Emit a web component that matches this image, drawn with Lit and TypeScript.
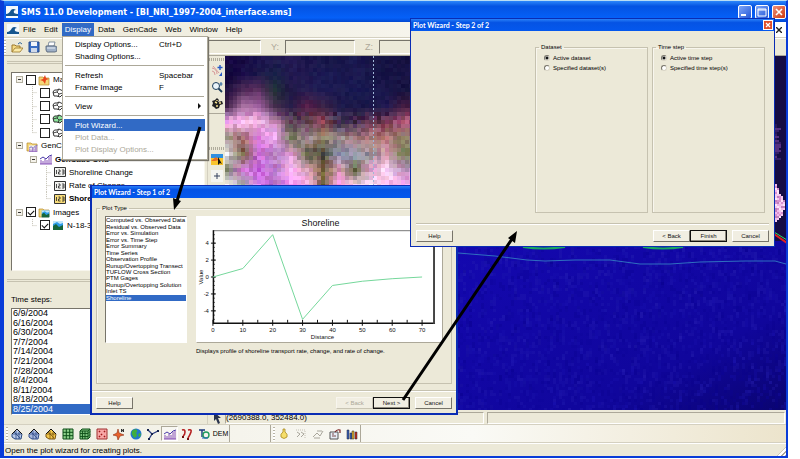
import { LitElement, html, css, svg, nothing } from "lit";
import { customElement, property } from "lit/decorators.js";
import { classMap } from "lit/directives/class-map.js";

/* ---------- shared control styles ---------- */

const controls = css`
  * { box-sizing: border-box; }
  button, input { font: inherit; color: inherit; margin: 0; padding: 0; }
  button { border: 0; background: none; }
  svg { display: block; }
  .push {
    width: 37px; height: 12px; flex: none;
    display: flex; align-items: center; justify-content: center;
    background: #f1eee2; color: #111;
    border: 1px solid; border-color: #fff #77746a #77746a #fff;
  }
  .push.primary { border: 1px solid #111; box-shadow: inset -1px -1px #8d897c; }
  .push:disabled { color: #aca899; border-color: #f7f5ee #c9c5b4 #c9c5b4 #f7f5ee; }
  .choices { display: flex; flex-direction: column; position: relative; }
  .choice { flex: 1 1 0; min-height: 0; line-height: 1; display: flex; align-items: center; padding-left: 1px; white-space: nowrap; }
  .choice input { position: absolute; opacity: 0; width: 1px; height: 1px; }
  .choice:has(input:checked) { background: #316ac5; color: #fff; }
`;

const choiceList = (name: string, items: string[], picked: string) =>
  items.map((t) => html`<label class="choice">
    <input type="radio" name=${name} .checked=${t === picked}>${t}</label>`);

/* ---------- icons, drawn on a 12 x 12 grid ---------- */

const mesh = (fill: string, edge: string) => svg`
  <path d="M1 6 6 1l5 5-1 5H4L1 9z" fill=${fill} stroke=${edge}/>
  <path d="M2 6h8M5 3v8M8 4v7M3 4l6 6" stroke=${edge} fill="none" stroke-width=".8"/>
  <path d="M1 6 6 1l5 5" stroke="#111" fill="none"/>`;
const scene = svg`<path d="M1 2h10v9H1z" fill="#2d9be8"/><path d="M1 7 4 5l3 3 4-2v5H1z" fill="#17663a"/><path d="M1 2h10v2L8 5 5 3 1 5z" fill="#bfe6fa"/>`;
const folder = svg`<path d="M1 3h4l1 1h5v7H1z" fill="#f4d678" stroke="#b68b2c" stroke-width=".7"/>`;
const coverage = (fill: string) => svg`<path d="M1 5q1-3 4-2l2-1 4 2v3L8 10 5 9 2 9z" fill=${fill} stroke="#333" stroke-width="1"/><path d="M1 6l4-1 2-3M5 5l2 2 4-1M7 7l-1 3" fill="none" stroke="#333" stroke-width=".9"/>`;
const numbers = (fill: string) => svg`<path d="M.5 1.5h11v9H.5z" fill=${fill} stroke="#333"/><path d="M2.500 4v4M4.500 4h1.500v2H4.500v2H6.500M8 4h2v4H8M8 6h2" fill="none" stroke="#222" stroke-width=".8"/>`;
const bars = svg`<path d="M1 11V7m2 4V8m2 3V6m2 5V7m2 4V4m2 7V3M0 11h12" stroke="#7b3fb0" stroke-width=".9"/><path d="M0 6l3-2 3 2 3-3 3-1" fill="none" stroke="#4a3aa8" stroke-width="1"/>`;

const icons: Record<string, unknown> = {
  app: svg`<path d="M0 0h12v12H0z" fill="#f4f9fc"/><path d="M0 8q3 0 5-4 2-2 5 0-3 0-2 3 2 1 4 1v2H0z" fill="#16568f"/>`,
  open: svg`<path d="M1 11V4h3l1 1h4v2" fill="#f6dc85" stroke="#9b762a"/><path d="M1 11l3-4h8l-3 4z" fill="#fbe9a6" stroke="#9b762a" stroke-width=".8"/><path d="M7 3q2-3 4 0" fill="none" stroke="#336a9c"/>`,
  save: svg`<path d="M1 1h10v10H1z" fill="#3b6fc4" stroke="#24498a"/><path d="M3 1h6v4H3z" fill="#f3f6fb"/><path d="M3 7h6v4H3z" fill="#cfd9ea"/>`,
  print: svg`<path d="M4 1h6L9 5H3z" fill="#fff" stroke="#68788c" stroke-width=".8"/><path d="M1 5h9l2 1v4l-2 1H2L1 9z" fill="#9fb0c6" stroke="#4b5a6e" stroke-width=".8"/><path d="M2 7h8" stroke="#e9eef5"/>`,
  pan: svg`<path d="M1 3q5 1 5 6M1 6q3 0 3 4M2 1l6 7" stroke="#d79a9a" fill="none"/><path d="M9 0v5M6.500 2.500h5" stroke="#2458c4" stroke-width="1.400"/><path d="M8 11h3V7z" fill="#2458c4"/>`,
  zoom: svg`<circle cx="5" cy="5" r="3.500" fill="#e9f4fa" stroke="#1c3d5c"/><path d="M7.500 7.500 11 11" stroke="#1c3d5c" stroke-width="1.800"/><path d="M10 1v4M8.500 3h3" stroke="#1c5c9c" stroke-width=".9"/>`,
  rotate: svg`<path d="M6 1l2 2-1 2 4-1 1 3-3 1-1 3-3 1-2-2-2-1 1-3-1-2 3-1z" fill="#222"/><path d="M4 5l2 1M8 6l2 0M5 9l2 0M6 3v1" stroke="#f3e08e" stroke-width="1.400"/>`,
  select: svg`<path d="M0 0h12v4H0z" fill="#2f8fe0"/><path d="M0 4h12v7H0z" fill="#f8c42c"/><path d="M0 7l5-4 3 3-4 1z" fill="#e66c22"/><path d="M7 3v8l2-2 2 1z" fill="#111"/>`,
  point: svg`<path d="M0 0h12v12H0z" fill="#f4f4f0"/><path d="M6 3v6M3 6h6" stroke="#34405c"/>`,
  pointer: svg`<path d="M3 0l7 6H7l2 5-2 1-2-5-2 2z" fill="#28324c"/>`,
  meshBlue: mesh("#b7c8e8", "#284880"), meshSlate: mesh("#a8b8dc", "#304c8c"), meshGold: mesh("#f4c84a", "#7a5410"),
  grid: svg`<path d="M1 1h10v10H1z" fill="#8fd08a" stroke="#0e4f18"/><path d="M1 4.300h10M1 7.700h10M4.300 1v10M7.700 1v10" stroke="#0e4f18"/>`,
  grid3: svg`<path d="M1 3l2-2h8v8l-2 2H1z" fill="#79c07a" stroke="#0e4f18"/><path d="M1 5.500h8l2-2M1 8.500h8l2-2M3.500 3v8M6 3v8M9 3v8M1 3h8l2-2" stroke="#0e4f18" fill="none" stroke-width=".9"/>`,
  scatter: svg`<path d="M1 1h10v10H1z" fill="#f7a6a6" stroke="#a03030"/><path d="M3 3h1v1H3zM8 3h1v1H8zM5 6h1v1H5zM8 8h1v1H8zM3 8h1v1H3z" fill="#a01818" stroke="#a01818" stroke-width=".6"/>`,
  compass: svg`<path d="M5 1l1 4 5 2-4 1-2 4-1-4-4-1 4-2z" fill="#e8622c" stroke="#8e2c10" stroke-width=".6"/><path d="M8.500 4V1l2 3V1" stroke="#222" fill="none" stroke-width=".9"/>`,
  globe: svg`<circle cx="6" cy="6" r="5.500" fill="#2277cc"/><path d="M2 3q3-3 5-1 1 2-1 3 2 2 0 4-2 2-3-1-2-2-1-5zM9 5l2 1-1 3-2-1z" fill="#3fae3c"/>`,
  river: svg`<path d="M1 2l4 4 6-3M5 6 2 11" stroke="#2b3c80" fill="none" stroke-width="1.300"/><path d="M0 1h2v2H0zM4 5h2v2H4zM10 2h2v2h-2zM1 10h2v2H1z" fill="#16234f"/>`,
  wave: bars,
  tracks: svg`<path d="M1 2q3-1 3 2T2 8M7 2q4-1 3 2T7 10" stroke="#b62222" fill="none" stroke-width="1.600"/><path d="M1 8h2v2H1zM6 10h2v2H6z" fill="#701010"/>`,
  annotate: svg`<path d="M1 2h6M4 2v7" stroke="#18387c" stroke-width="1.400"/><circle cx="8" cy="7" r="3" fill="none" stroke="#1f9a5c" stroke-width="1.400"/><path d="M4 10h6" stroke="#2863c8"/>`,
  bulb: svg`<path d="M5 1h2v3q3 2 2 5-3 3-6 0-1-3 2-5z" fill="#f6df6c" stroke="#a88920" stroke-width=".8"/>`,
  next: svg`<path d="M1 2h9v8" stroke="#c4c0b4" fill="none" stroke-dasharray="1 1"/><path d="M2 4l3 2-3 3M6 4l3 2-3 3" stroke="#a9a69c" fill="none"/>`,
  path: svg`<path d="M1 9l4-4 3 3 3-5M5 3l5 0M2 10h6" stroke="#a9a69c" fill="none"/>`,
  sheet: svg`<path d="M1 4h8v7H1z" fill="#e7edf6" stroke="#555"/><path d="M3 6h2M3 8h4" stroke="#7a4a4a"/><path d="M6 4q2-3 5-2v3" stroke="#7a2222" fill="none" stroke-width="1.200"/>`,
  chart: svg`<path d="M1 11V2h2v9zM4 11V5h2v6z" fill="#3a62b8" stroke="#223" stroke-width=".5"/><path d="M6 11V3h2v8z" fill="#e6b62c" stroke="#223" stroke-width=".5"/><path d="M9 11V4h2v7z" fill="#c8321e" stroke="#223" stroke-width=".5"/>`,
  scene,
  sceneFolder: svg`${folder}<g transform="translate(3 3) scale(.75)">${scene}</g>`,
  barFolder: svg`${folder}<g transform="translate(3 4) scale(.7)"><path d="M0 2h12v10H0z" fill="#eee"/>${bars}</g>`,
  mapFolder: svg`${folder}<path d="M7 1l1 3 3 1-3 1-1 4-2-3-3-1 3-1z" fill="#e8451c"/>`,
  cover: coverage("#fff"), coverGreen: coverage("#8be59a"),
  num: numbers("#f1f1ee"), numGold: numbers("#f8dc7a"), bars,
};

@customElement("sms-icon")
class SmsIcon extends LitElement {
  static styles = css`
    :host { display: block; width: 12px; height: 12px; flex: none; }
    svg { display: block; width: 100%; height: 100%; }`;
  @property() name = "";
  render() {
    return html`<svg viewBox="0 0 12 12" fill="none" aria-hidden="true">${icons[this.name]}</svg>`;
  }
}

/* ---------- aerial image ---------- */

const shore = [
  "1a0a48 150a40 1c1450 201a50 241a54 1a1448 181548 161446 1a1850 1a1648 181444 141040",
  "120838 180c48 1c1848 182048 221850 1e1850 1c1c54 1a1850 1c1a50 181648 161444 181244",
  "1e1040 502a58 5c3060 203038 201848 241c50 1e1c54 1c1a50 181850 1a1850 181648 161440",
  "402048 a870a0 a060a0 402c48 281c48 58204c 382044 1c1848 1a1848 181648 201850 401c40",
  "f0a8e8 ffc0f0 f0b0e0 c080b0 604858 604050 904850 403050 402848 60304c 703850 b05878",
  "a09080 a06868 e080e0 f0b0f8 707050 a88898 908060 a09098 a07880 b08080 c08078 8c7c68",
  "e8e0e8 70603c d070d8 b080c0 e0a0d0 606040 444438 8c8cac 9494a8 989090 d098a8 788058",
  "707868 e088e0 c060d8 c080d0 f8b0f0 e0a8c0 807048 d898b0 607048 e8a0d0 ffd8f8 c090c0",
  "f0f0f0 a0b0a0 e080f0 a058b8 ff98ff ffb0e8 706840 ff98e0 ffd0f0 fff0f8 ffc0f0 ffb0f0",
].map((r) => r.split(" ").map((h) => [0, 2, 4].map((i) => parseInt(h.slice(i, i + 2), 16))));

function randomizer(seed: number) {
  return () => {
    seed = (seed * 1664525 + 1013904223) >>> 0;
    return seed / 4294967296;
  };
}

function shoreCells() {
  const rnd = randomizer(7);
  const out = [];
  const step = 4;
  for (let y = 0; y < 132; y += step) {
    for (let x = 0; x < 188; x += step) {
      const gx = Math.min(x / 16, 10.99), gy = Math.min(y / 16, 7.99);
      const ix = Math.floor(gx), iy = Math.floor(gy), fx = gx - ix, fy = gy - iy;
      const amp = y < 56 ? 10 : 40;
      const light = (rnd() - 0.5) * amp;
      const rgb = [0, 1, 2].map((k) => {
        const top = shore[iy][ix][k] * (1 - fx) + shore[iy][ix + 1][k] * fx;
        const low = shore[iy + 1][ix][k] * (1 - fx) + shore[iy + 1][ix + 1][k] * fx;
        const v = top * (1 - fy) + low * fy + light + (rnd() - 0.5) * amp * 0.5;
        return Math.max(0, Math.min(255, Math.round(v)));
      });
      out.push(svg`<rect x=${x} y=${y} width=${step} height=${step} fill="rgb(${rgb.join(",")})"/>`);
    }
  }
  return out;
}

function seaCells() {
  const rnd = randomizer(21);
  const tones = ["#1c14b4", "#08008c", "#201cb0", "#0a0298", "#2a22b4"];
  return Array.from({ length: 2600 }, () => {
    const x = 232 + Math.floor(rnd() * 110) * 3, y = 190 + Math.floor(rnd() * 56) * 3;
    const tall = rnd() > 0.6 ? 6 : 3;
    return svg`<rect x=${x} y=${y} width="3" height=${tall} fill=${tones[Math.floor(rnd() * 5)]} opacity=".25"/>`;
  });
}

/* width of the bright bank, in 2px columns, going down the east edge */
const bank = [1, 1, 2, 2, 2, 3, 4, 4, 5, 5, 5, 5, 5, 4, 4, 4, 3, 2, 1];

function edgeCells() {
  const rnd = randomizer(5);
  const pinks = ["#f4c8f0", "#d890d0", "#ffe4fa", "#c080bc", "#f0b8ec"];
  const violets = ["#342068", "#543080", "#281858"];
  const out = [];
  for (let y = 68; y < 104; y += 2)
    out.push(svg`<rect x="550" y=${y} width=${2 + Math.floor(rnd() * 3) * 2} height="2" fill=${violets[Math.floor(rnd() * 3)]}/>`);
  bank.forEach((wide, row) => {
    for (let col = 0; col < wide; col++)
      out.push(svg`<rect x=${550 + col * 2} y=${128 + row * 2} width="2" height="2" fill=${pinks[Math.floor(rnd() * 5)]}/>`);
  });
  return out;
}

@customElement("aerial-map")
class AerialMap extends LitElement {
  static styles = css`
    :host { display: block; overflow: hidden; background: #10089c; }
    svg { display: block; width: 100%; height: 100%; }`;
  render() {
    return html`<svg viewBox="0 0 561 354" preserveAspectRatio="xMinYMin slice" shape-rendering="crispEdges" role="img" aria-label="Aerial image of the shoreline">
      <defs><linearGradient id="sea" x1="0" x2="1" y1="0" y2="1">
        <stop offset="0" stop-color="#1408b0"/><stop offset=".7" stop-color="#10069c"/><stop offset="1" stop-color="#0a0470"/>
      </linearGradient></defs>
      <rect width="561" height="354" fill="#150c44"/>
      <rect x="232" y="185" width="329" height="169" fill="url(#sea)"/>
      ${seaCells()}${shoreCells()}${edgeCells()}
      <path d="M148.500 0V132" stroke="#9fb8d8" stroke-dasharray="2 2"/>
      <g fill="none" shape-rendering="auto">
        <path d="M233 197l37 3 32 4 18 1 30-1h35l30 4h30l30-2 45-1h30l11 3" stroke="#2f6fc0"/>
        <path d="M298 191q20 3 42 0M418 191q20 3 40 0" stroke="#18a860" stroke-width="2"/>
        <path d="M549 178l13 9" stroke="#e02020" stroke-width="2"/>
        <path d="M549 176l13 8" stroke="#30e060"/>
      </g>
    </svg>`;
  }
}

/* ---------- profile plot ---------- */

const profile = [[0, 0], [10, 1], [20, 5], [30, -5], [40, -1], [50, -0.5], [60, -0.2], [70, 0]];
const px = (v: number) => 16 + v * 3;
const py = (v: number) => 60 - v * 8.5;

@customElement("profile-plot")
class ProfilePlot extends LitElement {
  static styles = css`
    :host { display: block; background: #fff; border: 1px solid; border-color: #fff #aca899 #aca899 #fff; }
    svg { display: block; width: 100%; height: 100%; }
    text { font-family: "Liberation Sans", Arial, sans-serif; font-size: 6px; fill: #111; }
    .title { font-size: 9px; }
    .mid { text-anchor: middle; }
    .end { text-anchor: end; }`;
  render() {
    const minorX = Array.from({ length: 8 }, (_, i) => i * 10 + 5).filter((v) => v < 70);
    const minorY = Array.from({ length: 21 }, (_, i) => (i - 10) / 2);
    return html`<svg viewBox="0 0 246 125" role="img" aria-label="Shoreline profile">
      <text class="title mid" x="124" y="9">Shoreline</text>
      <path d="M16 13.500H238" stroke="#777" fill="none"/>
      <path d="M16.500 13V107M16 106.500H239" stroke="#111" stroke-width="1.500" fill="none"/>
      <path d="M238 13V107" stroke="#444" stroke-width="2"/>
      ${minorY.map((v) => svg`<path d="M16 ${py(v)}h2" stroke="#111" stroke-width=".7"/>`)}
      ${[4, 2, 0, -2, -4].map((v) => svg`<path d="M14 ${py(v)}h5" stroke="#111"/><text class="end" x="12" y=${py(v) + 2}>${v}</text>`)}
      ${minorX.map((v) => svg`<path d="M${px(v)} 103v3" stroke="#111"/>`)}
      ${[0, 1, 2, 3, 4, 5, 6, 7].map((i) => svg`<path d="M${px(i * 10)} 103v6" stroke="#111"/><text class="mid" x=${px(i * 10)} y="115">${i * 10}</text>`)}
      <text class="mid" x="126" y="122">Distance</text>
      <text class="mid" transform="translate(6 60) rotate(-90)">Value</text>
      <polyline points=${profile.map(([x, y]) => `${px(x)},${py(y)}`).join(" ")} fill="none" stroke="#74d79a"/>
    </svg>`;
  }
}

/* ---------- wizard dialogs ---------- */

const dialogBase = css`
  :host {
    display: flex; flex-direction: column; background: #ece9d8;
    border: 1px solid #0a2cb4; font: 6px "Liberation Sans", Arial, sans-serif; color: #000;
  }
  .bar {
    height: 12px; flex: none; display: flex; align-items: center; justify-content: space-between;
    padding: 0 1px 0 2px; background: linear-gradient(#2a80f8, #0553e4 30%, #0458ee);
    color: #fff; font: bold 7px Lato, "Liberation Sans", sans-serif;
  }
  .close { width: 10px; height: 10px; background: #e0502c; border: 1px solid #fff; }
  fieldset { margin: 0; border: 1px solid #c6c2b0; min-width: 0; padding: 0; box-shadow: inset 1px 1px #f8f6ee; }
  legend { padding: 0 2px; margin-left: 3px; line-height: 8px; }
  .actions { display: flex; align-items: center; }
  .gap { flex: 1; }
  .cancel { margin-left: 5px; }
`;

@customElement("wizard-type")
class WizardType extends LitElement {
  static styles = [controls, dialogBase, css`
    :host { border-width: 1px 2px 2px; }
    .group { margin: 6px 4px 6px 4px; flex: 1; }
    .inner { display: flex; gap: 9px; padding: 4px 8px 0; }
    .types { width: 82px; height: 127px; flex: none; background: #fff; border: 1px solid; border-color: #77746a #fff #fff #77746a; }
    .choices { height: 84px; }
    .choice { padding-left: 0; }
    .right { flex: 1; min-width: 0; }
    profile-plot { height: 127px; }
    .note { margin: 4px 0 0; line-height: 8px; }
    .actions { border-top: 1px solid #c6c2b0; box-shadow: inset 0 1px #fff; padding: 6px 4px 4px; }`];
  render() {
    const types = ["Computed vs. Observed Data", "Residual vs. Observed Data", "Error vs. Simulation",
      "Error vs. Time Step", "Error Summary", "Time Series", "Observation Profile",
      "Runup/Overtopping Transect", "TUFLOW Cross Section", "PTM Gages", "Runup/Overtopping Solution",
      "Inlet TS", "Shoreline"];
    return html`<div class="bar">Plot Wizard - Step 1 of 2</div>
      <fieldset class="group"><legend>Plot Type</legend>
        <div class="inner">
          <div class="types"><div class="choices">${choiceList("type", types, "Shoreline")}</div></div>
          <div class="right"><profile-plot></profile-plot>
            <p class="note">Displays profile of shoreline transport rate, change, and rate of change.</p></div>
        </div>
      </fieldset>
      <div class="actions"><button class="push">Help</button><span class="gap"></span>
        <button class="push" disabled>&lt; Back</button><button class="push primary">Next &gt;</button>
        <button class="push cancel">Cancel</button></div>`;
  }
}

@customElement("wizard-options")
class WizardOptions extends LitElement {
  static styles = [controls, dialogBase, css`
    .body { flex: 1; display: flex; gap: 4px; justify-content: flex-end; padding: 12px 9px 10px 5px; }
    fieldset { width: 113px; }
    .radio { display: flex; align-items: center; gap: 3px; height: 10px; margin-left: 8px; }
    .radio:first-of-type { margin-top: 2px; }
    .radio input {
      appearance: none; width: 6px; height: 6px; border-radius: 50%; background: #fff;
      border: 1px solid; border-color: #77746a #d8d4c4 #d8d4c4 #77746a;
    }
    .radio input:checked { background: radial-gradient(#111 0 1px, #fff 2px); }
    .actions { margin: 0 5px; border-top: 1px solid #c6c2b0; box-shadow: inset 0 1px #fff; padding: 6px 0 4px; }`];
  render() {
    const group = (title: string, name: string, a: string, b: string) => html`<fieldset><legend>${title}</legend>
      <label class="radio"><input type="radio" name=${name} checked>${a}</label>
      <label class="radio"><input type="radio" name=${name}>${b}</label></fieldset>`;
    return html`<div class="bar">Plot Wizard - Step 2 of 2
        <button class="close" aria-label="Close"><svg viewBox="0 0 8 8"><path d="M2 2l4 4M6 2 2 6" stroke="#fff" stroke-width="1.200"/></svg></button></div>
      <div class="body">
        ${group("Dataset", "dataset", "Active dataset", "Specified dataset(s)")}
        ${group("Time step", "step", "Active time step", "Specified time step(s)")}
      </div>
      <div class="actions"><button class="push">Help</button><span class="gap"></span>
        <button class="push">&lt; Back</button><button class="push primary">Finish</button>
        <button class="push cancel">Cancel</button></div>`;
  }
}

/* ---------- project tree ---------- */

interface Node { depth: number; open?: boolean; check?: boolean; icon: string; label?: string; strong?: boolean; }

const nodes: Node[] = [
  { depth: 0, open: true, check: false, icon: "mapFolder", label: "Map" },
  { depth: 1, check: false, icon: "cover" },
  { depth: 1, check: false, icon: "cover" },
  { depth: 1, check: false, icon: "coverGreen" },
  { depth: 1, check: false, icon: "cover" },
  { depth: 0, open: true, icon: "barFolder", label: "GenCade" },
  { depth: 1, open: true, icon: "bars", label: "GenCade Grid", strong: true },
  { depth: 2, icon: "num", label: "Shoreline Change" },
  { depth: 2, icon: "num", label: "Rate of Change" },
  { depth: 2, icon: "numGold", label: "Shoreline", strong: true },
  { depth: 0, open: true, check: true, icon: "sceneFolder", label: "Images" },
  { depth: 1, check: true, icon: "scene", label: "N-18-3" },
];

@customElement("project-tree")
class ProjectTree extends LitElement {
  static styles = [controls, css`
    :host { display: block; background: #fff; border: 1px solid; border-color: #77746a #f8f6ee #f8f6ee #77746a; }
    .rows { display: grid; grid-auto-rows: 1fr; height: 159px; }
    .row { display: flex; align-items: center; gap: 3px; padding-left: 3px; white-space: nowrap; }
    .stem { width: 11px; align-self: stretch; flex: none; }
    .twig { width: 8px; align-self: stretch; flex: none; display: grid; place-items: center; }
    .line { width: 100%; height: 100%; }
    .toggle { width: 7px; height: 7px; border: 1px solid #b4b0a0; background: #f4f2ea; display: grid; place-items: center; }
    .toggle::after { content: ""; width: 3px; height: 1px; background: #333; }
    .box { appearance: none; width: 10px; height: 10px; border: 1px solid #222; background: #fff; flex: none; display: grid; place-items: center; }
    .box:checked::after { content: ""; width: 5px; height: 3px; border: solid #111; border-width: 0 0 1px 1px; rotate: -45deg; margin-top: -1px; }
    .box + sms-icon { margin-left: -1px; }
    .strong { font-weight: bold; }`];
  render() {
    return html`<div class="rows">${nodes.map((n, i) => html`<div class="row">
      ${Array.from({ length: n.depth }, () => html`<span class="stem"></span>`)}
      <span class="twig">${n.open
        ? html`<button class="toggle" aria-label="Collapse"></button>`
        : html`<svg class="line" viewBox="0 0 8 13" fill="none"><path d="M3.500 0v${nodes[i + 1] && nodes[i + 1].depth === n.depth && !nodes[i + 1].open ? 13 : 6.5}M3.500 6.500H8" stroke="#c4c0b4" stroke-dasharray="1 1"/></svg>`}</span>
      ${n.check === undefined ? nothing : html`<input class="box" type="checkbox" aria-label=${n.label ?? "Coverage"} .checked=${n.check}>`}
      <sms-icon name=${n.icon}></sms-icon>
      ${n.label ? html`<span class=${classMap({ strong: !!n.strong })}>${n.label}</span>` : nothing}
    </div>`)}</div>`;
  }
}

/* ---------- main window ---------- */

@customElement("app-root")
class AppRoot extends LitElement {
  static styles = [controls, css`
    :host { display: block; position: relative; background: #fff; min-height: 100vh; font: 8px "Liberation Sans", Arial, sans-serif; color: #000; overflow: hidden; }
    .window {
      margin-right: 12px; display: flex; flex-direction: column; background: #ece9d8;
      border: solid #0a3cd8; border-width: 0 2px 2px 4px; border-top: 1px solid #b8dcf4;
    }
    .title {
      height: 21px; display: flex; align-items: center; gap: 3px; padding: 1px 0 0 2px;
      background: linear-gradient(#2c86fa, #0453e2 25%, #0560f8 80%, #0348d0);
      color: #fff; font: bold 9px "DejaVu Sans Condensed", "DejaVu Sans", sans-serif; white-space: nowrap;
    }
    .title .fill { flex: 1; }
    .caption { width: 14px; height: 14px; border: 1px solid #fff; border-radius: 2px; background: linear-gradient(135deg, #7ea6f8, #2458d8); }
    .caption.quit { background: linear-gradient(135deg, #f09078, #cc3810); }
    .menubar { height: 16px; display: flex; align-items: center; background: linear-gradient(90deg, #ece9d8, #fff); border-bottom: 1px solid #d4d0c0; }
    .menubar sms-icon { margin: 0 0 0 3px; }
    .menubar button { height: 14px; padding: 0 4px; }
    .menubar .on { background: #316ac5; color: #fff; padding: 0 3px; }
    .menubar .fill { flex: 1; }
    .tools { height: 18px; display: flex; align-items: center; border-bottom: 1px solid #aca899; box-shadow: inset 0 1px #fff; }
    .tools .btn, .dock .btn { width: 17px; display: grid; place-items: center; }
    .grip { width: 2px; height: 14px; flex: none; background: repeating-linear-gradient(#b8b4a4 0 1px, #fff 1px 3px); }
    .tools .grip { margin-right: 2px; }
    .coord { display: flex; align-items: center; gap: 6px; color: #aca899; margin-left: 10px; font-size: 9px; }
    .coord.first { margin-left: 132px; }
    .coord input { width: 70px; height: 14px; background: #ece9d8; border: 1px solid; border-color: #77746a #fff #fff #77746a; }
    .main { display: flex; }
    .side { width: 203px; flex: none; padding: 5px 2px 0 7px; display: flex; flex-direction: column; }
    .rule { height: 3px; margin: 0 0 0 -4px; border: solid #c6c2b0; border-width: 1px 0; flex: none; }
    project-tree { height: 199px; margin: 8px 0; }
    h2 { font: inherit; margin: 13px 0 4px; line-height: 9px; }
    .steps { background: #fff; border: 1px solid; border-color: #77746a #fff #fff #77746a; font-size: 9px; height: 107px; }
    .strip { width: 18px; flex: none; padding-top: 2px; display: flex; flex-direction: column; align-items: center; gap: 4px; border-left: 1px solid #d4d0c0; }
    .strip .last { margin-top: auto; }
    .dots { width: 15px; height: 3px; background: repeating-linear-gradient(90deg, #b0ac9c 0 1px, transparent 1px 2px); }
    .split { width: 16px; height: 1px; background: #aca899; margin-bottom: 29px; }
    .view { flex: 1; min-width: 0; display: flex; flex-direction: column; }
    aerial-map { height: 354px; }
    .readout { display: flex; gap: 3px; padding: 2px 1px 0 0; height: 14px; }
    .cell { border: 1px solid; border-color: #aca899 #fff #fff #aca899; height: 12px; line-height: 9px; flex: 1; }
    .cell.pos { flex: none; width: 259px; }
    .dock { height: 19px; display: flex; align-items: center; padding-left: 2px; border: solid #d4d0c0; border-width: 1px 0; background: linear-gradient(90deg, #f0eee2, #fafaf6 60%, #ece4cc); }
    .dock .btn { height: 15px; }
    .dock .on { border: 1px solid; border-color: #aca899 #fff #fff #aca899; background: #f8f7f2; }
    .dock .dem { font-size: 7px; }
    .sep { width: 1px; height: 17px; background: #aca899; }
    .sep.wide { margin: 0 2px 0 40px; }
    .status { height: 13px; display: flex; align-items: center; justify-content: space-between; border-top: 1px solid #fff; padding-left: 1px; }
    .size { width: 9px; height: 9px; align-self: flex-end; background: repeating-linear-gradient(135deg, #aca899 0 1px, #fff 1px 3px); clip-path: polygon(100% 0, 100% 100%, 0 100%); }
    .menu {
      position: absolute; left: 62px; top: 36px; width: 146px; padding: 1px 2px 4px 1px; background: #fff;
      border: 1px solid #aca899; box-shadow: 1px 1px 1px #77746a;
    }
    .item { display: flex; align-items: center; width: 100%; height: 12px; padding: 0 4px 0 11px; text-align: left; }
    .item span:first-child { width: 84px; }
    .item.on { background: #316ac5; color: #fff; }
    .item:disabled { color: #aca899; }
    .item .more { margin-left: auto; width: 3px; height: 6px; background: #111; clip-path: polygon(0 0, 100% 50%, 0 100%); }
    .menu hr { margin: 3px 1px; border: 0; height: 1px; background: #aca899; }
    wizard-type { position: absolute; left: 90px; top: 185px; width: 368px; height: 230px; }
    wizard-options { position: absolute; left: 410px; top: 18px; width: 365px; height: 229px; }
    .arrows { position: absolute; left: 0; top: 0; width: 800px; height: 459px; pointer-events: none; }`];

  render() {
    const steps = ["6/9/2004", "6/16/2004", "6/30/2004", "7/7/2004", "7/14/2004", "7/21/2004",
      "7/28/2004", "8/4/2004", "8/11/2004", "8/18/2004", "8/25/2004"];
    const btn = (name: string, on = false) => html`<button class=${classMap({ btn: true, on })} aria-label=${name}><sms-icon name=${name}></sms-icon></button>`;
    const item = (label: string, key = "", on = false, off = false) => html`<button class=${classMap({ item: true, on })} ?disabled=${off}><span>${label}</span>${key ? html`<span>${key}</span>` : nothing}</button>`;
    return html`
      <div class="window">
        <header class="title"><sms-icon name="app"></sms-icon>SMS 11.0 Development - [BI_NRI_1997-2004_interface.sms]<span class="fill"></span>
          <button class="caption" aria-label="Minimize"><svg viewBox="0 0 12 12"><path d="M2 9h5" stroke="#fff" stroke-width="2"/></svg></button>
          <button class="caption" aria-label="Restore"><svg viewBox="0 0 12 12"><path d="M2 3h8v7H2zM2 4h8" stroke="#fff" fill="none"/></svg></button>
          <button class="caption quit" aria-label="Close"><svg viewBox="0 0 12 12"><path d="M3 3l6 6M9 3 3 9" stroke="#fff" stroke-width="1.600"/></svg></button>
        </header>
        <nav class="menubar"><sms-icon name="app"></sms-icon>
          ${["File", "Edit", "Display", "Data", "GenCade", "Web", "Window", "Help"].map((m) => html`<button class=${classMap({ on: m === "Display" })}>${m}</button>`)}
          <span class="fill"></span>
          <button aria-label="Close document"><svg width="6" height="6" viewBox="0 0 6 6"><path d="M0 0l6 6M6 0 0 6" stroke="#222" stroke-width="1.400"/></svg></button>
        </nav>
        <div class="tools"><span class="grip"></span>${btn("open")}${btn("save")}${btn("print")}
          <label class="coord first"><input aria-label="X"></label><label class="coord">Y:<input></label><label class="coord">Z:<input></label>
        </div>
        <div class="main">
          <aside class="side">
            <div class="rule"></div><project-tree></project-tree><div class="rule"></div>
            <h2>Time steps:</h2>
            <div class="steps choices">${choiceList("timestep", steps, "8/25/2004")}</div>
          </aside>
          <div class="strip"><span class="dots"></span>${btn("pan")}${btn("zoom")}${btn("rotate")}
            <span class="split"></span><span class="dots"></span>${btn("select")}${btn("point")}
            <sms-icon class="last" name="pointer"></sms-icon></div>
          <section class="view"><aerial-map></aerial-map>
            <div class="readout"><span class="cell pos">(2690388.0, 352484.0)</span><span class="cell"></span></div>
          </section>
        </div>
        <div class="dock"><span class="grip"></span>
          ${["meshBlue", "meshSlate", "meshGold", "grid", "grid3", "scatter", "compass", "globe", "river"].map((n) => btn(n))}
          ${btn("wave", true)}${btn("tracks")}${btn("annotate")}<button class="btn dem">DEM</button>
          <span class="sep"></span><span class="sep wide"></span><span class="grip"></span>
          ${["bulb", "next", "path", "sheet", "chart"].map((n) => btn(n))}<span class="sep"></span>
        </div>
        <footer class="status">Open the plot wizard for creating plots.<span class="size"></span></footer>
      </div>
      <div class="menu">
        ${item("Display Options...", "Ctrl+D")}${item("Shading Options...")}<hr>
        ${item("Refresh", "Spacebar")}${item("Frame Image", "F")}<hr>
        <button class="item"><span>View</span><span class="more"></span></button><hr>
        ${item("Plot Wizard...", "", true)}${item("Plot Data...", "", false, true)}${item("Plot Display Options...", "", false, true)}
      </div>
      <wizard-type></wizard-type>
      <wizard-options></wizard-options>
      <svg class="arrows" viewBox="0 0 800 459" aria-hidden="true">
        <path d="M200 127 177 201M403 400 512 239" stroke="#000" stroke-width="3" fill="none"/>
        <path d="M174 210l-1-12 8 3zM517 231l-2 12-7-5z"/>
      </svg>`;
  }
}
